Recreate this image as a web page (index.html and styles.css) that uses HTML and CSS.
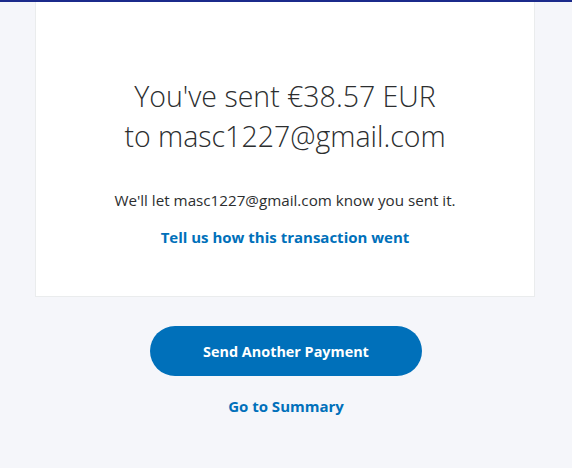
FILE: index.html
```html
<!DOCTYPE html>
<html lang="en">
<head>
<meta charset="utf-8">
<link rel="stylesheet" href="styles.css">
</head>
<body>
<div class="topbar"></div>
<main class="page">
  <section class="card">
    <h1 class="headline">You've sent €38.57 EUR<br>to masc1227@gmail.com</h1>
    <p class="note">We'll let masc1227@gmail.com know you sent it.</p>
    <a class="link feedback" href="#">Tell us how this transaction went</a>
  </section>
  <div class="actions">
    <a class="btn-primary" href="#">Send Another Payment</a>
    <a class="link summary" href="#">Go to Summary</a>
  </div>
</main>
</body>
</html>
```
FILE: styles.css
```css
* { box-sizing: border-box; }
html, body { margin: 0; padding: 0; }
body {
  background: #f5f6fa;
  font-family: "Open Sans", "Noto Sans", sans-serif;
  color: #2c2e2f;
  width: 572px;
  height: 468px;
  overflow: hidden;
}
.topbar { height: 2px; background: #1b2a8b; }
.page { display: flex; flex-direction: column; align-items: center; }
.card {
  width: 500px;
  height: 295px;
  margin-right: 2px;
  background: #fff;
  border: 1px solid #eaeced;
  border-top: none;
  display: flex;
  flex-direction: column;
  align-items: center;
  padding-top: 74px;
}
.headline {
  margin: 0;
  font-weight: 300;
  font-size: 28.5px;
  line-height: 40px;
  text-align: center;
}
.note {
  margin: 34px 0 0;
  font-size: 15.2px;
  line-height: 20px;
}
.link {
  color: #0070ba;
  font-weight: 700;
  font-size: 15px;
  text-decoration: none;
}
.feedback { margin-top: 17px; line-height: 20px; }
.actions { display: flex; flex-direction: column; align-items: center; padding-top: 29px; }
.btn-primary {
  width: 272px;
  height: 50px;
  border-radius: 25px;
  background: #0070ba;
  color: #fff;
  font-weight: 700;
  font-size: 14.4px;
  text-decoration: none;
  display: flex;
  align-items: center;
  justify-content: center;
}
.summary { margin-top: 20px; line-height: 20px; }
```
